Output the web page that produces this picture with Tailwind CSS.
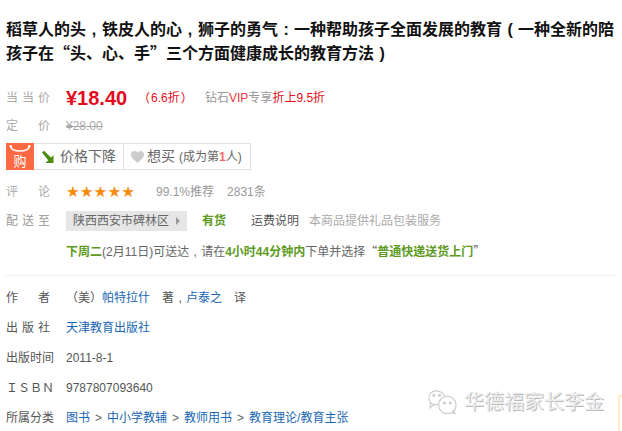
<!DOCTYPE html>
<html lang="zh">
<head>
<meta charset="utf-8">
<script src="https://cdn.jsdelivr.net/npm/@tailwindcss/browser@4"></script>
</head>
<body class="bg-white">
<div class="relative w-[622px] h-[431px] overflow-hidden bg-white text-[12px] text-[#666] font-['Liberation_Sans','Noto_Sans_CJK_SC',sans-serif]">
  <div class="pl-[6px] pt-[18px]">
    <h1 class="h-[48px] text-[16px] leading-[23px] font-bold text-[#111] whitespace-nowrap">稻草人的头<span class="inline-block w-[16px] text-center">,</span>铁皮人的心<span class="inline-block w-[16px] text-center">,</span>狮子的勇气<span class="inline-block w-[16px] text-center">:</span>一种帮助孩子全面发展的教育<span class="inline-block w-[16px] text-center">(</span>一种全新的陪<br>孩子在<span class="font-['Noto_Sans_CJK_SC']">“</span>头、心、手<span class="font-['Noto_Sans_CJK_SC']">”</span>三个方面健康成长的教育方法<span class="inline-block w-[16px] text-center">)</span></h1>

    <div class="flex items-center h-[29px] mt-[17px]">
      <span class="w-[60px] text-[#aaa] tracking-[4px] whitespace-nowrap">当当价</span>
      <span class="w-[72px] text-[20px] font-bold text-[#e30b20]">¥18.40</span>
      <span class="w-[67px] text-[#e30b20] flex whitespace-nowrap font-['Noto_Sans_CJK_SC']"><span>（</span><span class="ml-[1px] font-['Liberation_Sans','Noto_Sans_CJK_SC']">6.6折</span><span class="ml-[1px]">）</span></span>
      <span class="text-[#999]">钻石<span class="text-[#e4393c]">VIP</span>专享<span class="text-[#e30b20]">折上9.5折</span></span>
    </div>

    <div class="flex items-center h-[28px]">
      <span class="w-[60px] text-[#aaa] flex gap-[20px]"><span>定</span><span>价</span></span>
      <span class="text-[#aaa] line-through">¥28.00</span>
    </div>

    <div class="flex h-[27px] mt-[3px]">
      <div class="relative w-[28px] h-[27px] bg-[#fb6a42] flex items-end justify-center pb-[1px] text-white text-[13px] leading-[15px]">
        <svg class="absolute left-[3px] top-[1px]" width="22" height="11" viewBox="0 0 22 11" fill="none"><path d="M1.5 2.5C3 8.5 19 8.5 20.5 2.5" stroke="#fff" stroke-width="1.4"/><circle cx="1.8" cy="2.2" r="1.2" fill="#fff"/><circle cx="20.2" cy="2.2" r="1.2" fill="#fff"/></svg>
        购
      </div>
      <div class="flex items-center h-[27px] border border-l-0 border-[#e1e1e1] text-[14px] text-[#666]">
        <div class="flex items-center w-[90px] pl-[7px] h-full border-r border-[#e1e1e1] gap-[4px]">
          <svg width="15" height="14" viewBox="0 0 15 14"><path d="M1 2.5L3 .8 10 7.5 12.5 5V13H4.5L7.2 10.3Z" fill="#4d8a10"/></svg>
          <span>价格下降</span>
        </div>
        <div class="flex items-center h-full pl-[7px] pr-[8px] gap-[3px]">
          <svg width="13" height="12" viewBox="0 0 13 12"><path d="M6.5 12C3 9 0 7 0 3.6 0 1.5 1.5 0 3.4 0 4.7 0 5.9.7 6.5 1.8 7.1.7 8.3 0 9.6 0 11.5 0 13 1.5 13 3.6 13 7 10 9 6.5 12Z" fill="#ccc"/></svg>
          <span>想买</span>
          <span class="text-[12px] ml-[1px]">(成为第<b class="text-[#f56a5e]">1</b>人)</span>
        </div>
      </div>
    </div>

    <div class="flex items-center h-[29px] mt-[7px]">
      <span class="w-[60px] text-[#aaa] flex gap-[20px]"><span>评</span><span>论</span></span>
      <span class="w-[90px] text-[15.4px] leading-[14px] text-[#f78b0d] font-['DejaVu_Sans',sans-serif] whitespace-nowrap">★★★★★</span>
      <span class="text-[#999]">99.1%推荐</span>
      <span class="text-[#999] ml-[13px]">2831条</span>
    </div>

    <div class="flex items-center h-[30px]">
      <span class="w-[60px] text-[#999] tracking-[4px] whitespace-nowrap">配送至</span>
      <span class="flex items-center w-[121px] h-[20px] pl-[7px] bg-[#e6e6e6] text-[#666] whitespace-nowrap">陕西西安市碑林区<span class="ml-[7px] w-0 h-0 border-y-[4px] border-y-transparent border-l-[4px] border-l-[#999]"></span></span>
      <span class="ml-[15px] w-[49px] font-bold text-[#5d9a1e]">有货</span>
      <span class="text-[#555] w-[58px]">运费说明</span>
      <span class="text-[#aaa]">本商品提供礼品包装服务</span>
    </div>

    <div class="flex items-center h-[30px] pl-[60px] text-[#666] whitespace-nowrap">
      <span><span class="text-[#5d9a1e] font-bold">下周二</span>(2月11日)可送达<span class="inline-block w-[12px] text-center">,</span>请在<b class="text-[#5d9a1e]">4小时44分钟内</b>下单并选择<span class="font-['Noto_Sans_CJK_SC']">“</span><b class="text-[#5d9a1e]">普通快递送货上门</b><span class="font-['Noto_Sans_CJK_SC']">”</span></span>
    </div>

    <div class="w-[609px] mt-[9px] border-t border-dotted border-[#ddd]"></div>

    <div class="flex flex-col mt-[7px] text-[#555]">
      <div class="flex items-center h-[30px]">
        <span class="w-[60px] flex gap-[20px]"><span>作</span><span>者</span></span>
        <span class="whitespace-nowrap">（美）<span class="text-[#1a66b3]">帕特拉什</span><span class="ml-[12px]">著<span class="inline-block w-[12px] text-center">,</span></span><span class="text-[#1a66b3]">卢泰之</span><span class="ml-[12px]">译</span></span>
      </div>
      <div class="flex items-center h-[30px]">
        <span class="w-[60px] tracking-[4px] whitespace-nowrap">出版社</span>
        <span class="text-[#1a66b3]">天津教育出版社</span>
      </div>
      <div class="flex items-center h-[30px]">
        <span class="w-[60px]">出版时间</span>
        <span>2011-8-1</span>
      </div>
      <div class="flex items-center h-[30px]">
        <span class="w-[60px] whitespace-nowrap">ＩＳＢＮ</span>
        <span>9787807093640</span>
      </div>
      <div class="flex items-center h-[30px]">
        <span class="w-[60px]">所属分类</span>
        <span class="text-[#1a66b3] whitespace-nowrap">图书<span class="text-[#666] mx-[5px]">&gt;</span>中小学教辅<span class="text-[#666] mx-[5px]">&gt;</span>教师用书<span class="text-[#666] mx-[5px]">&gt;</span>教育理论/教育主张</span>
      </div>
    </div>
  </div>

  <div class="absolute left-[427px] top-[389px] flex items-center gap-[6px] text-[20px] leading-[22px] text-[#ececec] whitespace-nowrap [text-shadow:1px_1px_0_#bbb]">
    <svg width="31" height="26" viewBox="0 0 32 26" fill="none" stroke="#ccc" stroke-width="1.2"><path d="M12 15C7 17 3 15 2 10 1.5 5 5 1 10 1.5 14 2 17 4 18 7"/><path d="M4 14L3 19 7 16"/><circle cx="21" cy="16" r="9"/><path d="M25 24L29 25 27 21"/><circle cx="7" cy="6" r="1" fill="#ccc"/><circle cx="13" cy="6" r="1" fill="#ccc"/><circle cx="18" cy="14" r="1" fill="#ccc"/><circle cx="24" cy="14" r="1" fill="#ccc"/></svg>
    <span>华德福家长李金</span>
  </div>
  <div class="absolute left-[618px] top-[395px] w-[10px] h-[40px] border-2 border-[#fdeec4]"></div>
</div>
</body>
</html>
